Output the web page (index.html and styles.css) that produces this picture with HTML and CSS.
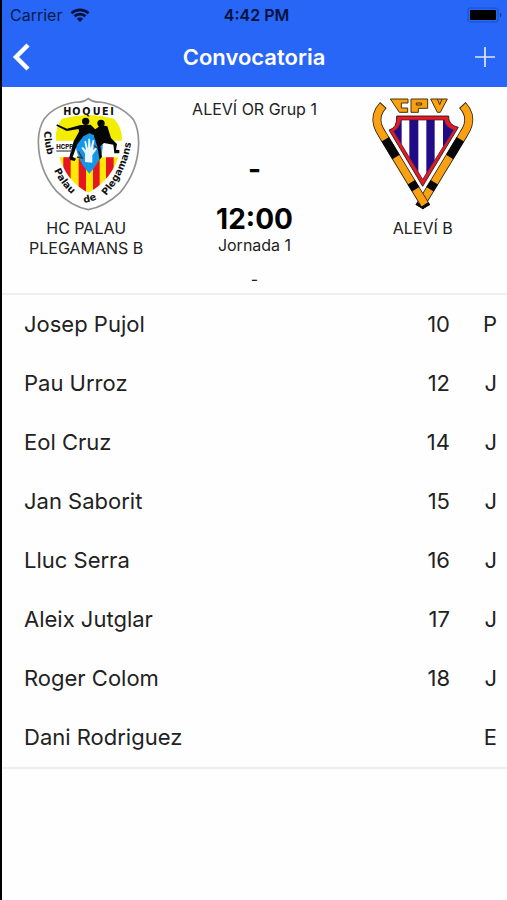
FILE: index.html
```html
<!DOCTYPE html>
<html lang="ca">
<head>
<meta charset="utf-8">
<meta name="viewport" content="width=device-width, initial-scale=1">
<title>Convocatoria</title>
<link rel="stylesheet" href="styles.css">
</head>
<body>
<header class="top">
  <div class="status">
    <div class="carrier">
      <span>Carrier</span>
      <svg class="wifi" viewBox="0 0 20 14" aria-hidden="true">
        <path d="M1.500 5.200a12.500 12.500 0 0 1 17 0M4.500 8.300a8 8 0 0 1 11 0" fill="none" stroke="currentColor" stroke-width="2.600"/>
        <path d="M6.800 10.700a4.600 4.600 0 0 1 6.400 0L10 14z" fill="currentColor"/>
      </svg>
    </div>
    <span class="clock">4:42 PM</span>
    <svg class="battery" viewBox="0 0 36 16" aria-hidden="true">
      <rect x="1" y="1" width="30" height="14" rx="3" fill="none" stroke="#1f57d6" stroke-width="1.500"/>
      <rect x="3" y="3" width="26" height="10" rx="1" fill="#000"/>
      <path d="M33 5.500a3 3 0 0 1 0 5z" fill="#103a96"/>
    </svg>
  </div>
  <nav class="bar">
    <button class="icon-button" type="button" aria-label="Enrere">
      <svg class="back" viewBox="0 0 18 28" aria-hidden="true"><path d="M16 2 4 14l12 12" fill="none" stroke="#fff" stroke-width="4.500"/></svg>
    </button>
    <h1 class="title">Convocatoria</h1>
    <button class="icon-button end" type="button" aria-label="Afegir">
      <svg class="plus" viewBox="0 0 22 22" aria-hidden="true"><path d="M11 1v20M1 11h20" fill="none" stroke="#dce8ff" stroke-width="1.700"/></svg>
    </button>
  </nav>
</header>
<main>
  <section class="match">
    <div class="team">
      <svg class="crest" viewBox="-12 0 360 375" role="img" aria-label="Club Hoquei Palau de Plegamans">
        <defs>
          <clipPath id="field"><path d="M96 86Q174 64 252 86Q286 122 272 180Q248 270 175 308Q108 276 84 190Q66 124 96 86z"/></clipPath>
          <path id="arc-club" d="M42 124Q43 170 60 214"/>
          <path id="arc-palau" d="M72 241Q98 297 152 335"/>
          <path id="arc-de" d="M162 339Q190 335 218 319"/>
          <path id="arc-plegamans" d="M228 318Q300 238 308 118"/>
        </defs>
        <path d="M142 36Q160 38 175 26Q190 38 208 36Q270 43 310 88Q326 115 326 160Q324 245 270 308Q225 350 175 359Q125 350 80 304Q26 242 25 155Q25 115 43 86Q78 43 142 36z" fill="#fff" stroke="#929292" stroke-width="5"/>
        <g clip-path="url(#field)">
          <path d="M60 70h240v100H60z" fill="#f3ed00"/>
          <path d="M60 152h240v50H60z" fill="#fff"/>
          <path d="M60 202h240v120H60z" fill="#ffe900"/>
          <path d="M100 202h22v120h-22zM146 202h22v120h-22zM189 202h20v120h-20zM228 202h23v120h-23z" fill="#e51621"/>
        </g>
        <path d="M136 154Q150 130 178 130Q207 132 218 166Q220 204 178 251Q137 207 136 154z" fill="#1597e8"/>
        <g fill="#050505">
          <circle cx="167" cy="94" r="11"/>
          <path d="M151 105l31-1 19 19-4 14-19-7-18 9-18 24-14 38 10 5-4 7-13-3-3-8 13-48 16-29-1-8-36 6-31-16 2-4 30 13z"/>
          <circle cx="213" cy="100" r="11"/>
          <path d="M193 120l20-15 19 4 11 35 18 18-3 17 10 1v10h-15l-3-26-28-5-11 10 5 31-7 9-7-39-10-31z"/>
        </g>
        <path d="M145 184l12 20-16-3M187 162l17 15" fill="none" stroke="#34384c" stroke-width="4"/>
        <path d="M165 216v-26l-11-16 5-3 9 10-5-27 5-1 6 23 1-30h5l2 29 6-25 5 1-4 29 8-7 4 3-14 20v22z" fill="#e8f7ff"/>
        <text class="club-code" x="79" y="177">HCPP</text>
        <path d="M79 183h47" stroke="#555" stroke-width="4"/>
        <g class="crest-text">
          <text x="100 127 157 188 216 241" y="74">HOQUEI</text>
          <text><textPath href="#arc-club">Club</textPath></text>
          <text><textPath href="#arc-palau">Palau</textPath></text>
          <text><textPath href="#arc-de">de</textPath></text>
          <text><textPath href="#arc-plegamans">Plegamans</textPath></text>
        </g>
      </svg>
      <h2 class="team-name">HC PALAU PLEGAMANS B</h2>
    </div>
    <div class="details">
      <p class="small group">ALEVÍ OR Grup 1</p>
      <p class="score">-</p>
      <p class="time">12:00</p>
      <p class="small">Jornada 1</p>
      <p class="place">-</p>
    </div>
    <div class="team">
      <svg class="crest" viewBox="-6 0 360 375" role="img" aria-label="CPV">
        <defs>
          <clipPath id="shield"><path d="M108 90h130q4 22 28 30L173 268 86 124q18-10 22-34z"/></clipPath>
          <g id="stick" fill="none">
            <path d="M55 45Q29 73 38 105Q42 118 50 130L184 351" stroke="#2c2415" stroke-width="27"/>
            <path d="M53 47Q29 73 38 105Q42 118 50 130L183 349" stroke="#f9a112" stroke-width="22"/>
            <path d="M61 148L93 201M139 277L152 298M179 343L184 351" stroke="#080808" stroke-width="26"/>
          </g>
        </defs>
        <g class="cpv">
          <path d="M76 27h53v12h-20v15h19v13h-25zM138 27h50v28h-28v12h-22zM197 27h50l-21 40h-9z"/>
          <path d="M154 39h16v6h-16zM217 27l7 17 7-17" fill="none"/>
        </g>
        <path d="M95 78h156q-2 27 29 34L173 289 72 120q25-6 23-42z" fill="#e41b20" stroke="#171320" stroke-width="2.500"/>
        <g clip-path="url(#shield)">
          <path d="M70 80h210v200H70z" fill="#fff"/>
          <path d="M80 80h30v200H80zM133 80h27v200h-27zM184 80h25v200h-25zM234 80h30v200h-30z" fill="#220b86"/>
        </g>
        <path d="M108 90h130q4 22 28 30L173 268 86 124q18-10 22-34z" fill="none" stroke="#381336" stroke-width="2"/>
        <use href="#stick" transform="translate(347 0) scale(-1 1)"/>
        <use href="#stick"/>
      </svg>
      <h2 class="team-name">ALEVÍ B</h2>
    </div>
  </section>
  <table class="players">
    <tbody>
      <tr><td>Josep Pujol</td><td class="number">10</td><td class="role">P</td></tr>
      <tr><td>Pau Urroz</td><td class="number">12</td><td class="role">J</td></tr>
      <tr><td>Eol Cruz</td><td class="number">14</td><td class="role">J</td></tr>
      <tr><td>Jan Saborit</td><td class="number">15</td><td class="role">J</td></tr>
      <tr><td>Lluc Serra</td><td class="number">16</td><td class="role">J</td></tr>
      <tr><td>Aleix Jutglar</td><td class="number">17</td><td class="role">J</td></tr>
      <tr><td>Roger Colom</td><td class="number">18</td><td class="role">J</td></tr>
      <tr><td>Dani Rodriguez</td><td class="number"></td><td class="role">E</td></tr>
    </tbody>
  </table>
</main>
</body>
</html>
```

FILE: styles.css
```css
* { box-sizing: border-box; }

body {
  margin: 0;
  min-height: 100vh;
  border-left: 2px solid #000;
  background: #fefefe;
  color: #222;
  font-family: Inter, "Liberation Sans", sans-serif;
}

h1, h2, p { margin: 0; }

.top {
  background: #2866f7;
}

.status, .bar {
  display: grid;
  grid-template-columns: 1fr auto 1fr;
  align-items: center;
}

.status {
  height: 30px;
  padding: 0 4px 0 8px;
  color: #071b4b;
  font-size: 16px;
}

.carrier {
  display: flex;
  align-items: center;
  gap: 8px;
}

.wifi { width: 20px; height: 14px; color: #03123a; }
.clock { color: #03123a; font-weight: 600; }
.battery { width: 36px; height: 16px; justify-self: end; }

.bar {
  height: 57px;
  padding: 0 11px 4px 10px;
}

.title {
  color: #fff;
  font-size: 22px;
  font-weight: 600;
  line-height: 28px;
}

.icon-button {
  display: flex;
  padding: 0;
  border: 0;
  background: none;
  justify-self: start;
}

.end { justify-self: end; }
.back { width: 18px; height: 28px; }
.plus { width: 22px; height: 22px; }

.match {
  display: grid;
  grid-template-columns: repeat(3, 1fr);
  padding: 3px 0 4px;
  border-bottom: 2px solid #eee;
}

.team, .details {
  display: flex;
  flex-direction: column;
  align-items: center;
  text-align: center;
}

.crest { width: 120px; height: 125px; }

.team-name {
  max-width: 128px;
  padding-top: 3px;
  font-size: 16px;
  font-weight: 400;
  line-height: 20px;
}

.small { font-size: 16px; line-height: 20px; }
.group { padding-top: 9px; }

.score {
  padding-top: 34px;
  color: #000;
  font-size: 28px;
  font-weight: 700;
  line-height: 32px;
}

.time {
  padding-top: 18px;
  color: #000;
  font-size: 28px;
  font-weight: 700;
  line-height: 32px;
}

.place { padding-top: 14px; font-size: 16px; line-height: 20px; }

.crest-text {
  font-family: "DejaVu Sans", sans-serif;
  font-size: 29px;
  font-weight: 700;
  fill: #111;
}

.club-code { font-size: 18px; font-weight: 800; fill: #111; }
.cpv { fill: #f9a112; stroke: #49320e; stroke-width: 3; }

.players {
  width: 100%;
  border-collapse: collapse;
  border-bottom: 2px solid #eee;
  font-size: 22px;
  line-height: 27px;
}

.players td { padding: 16px 0 16px 22px; }
.players .number { width: 80px; padding-left: 0; text-align: right; }
.players .role { width: 57px; padding: 16px 10px 16px 0; text-align: right; }
```
